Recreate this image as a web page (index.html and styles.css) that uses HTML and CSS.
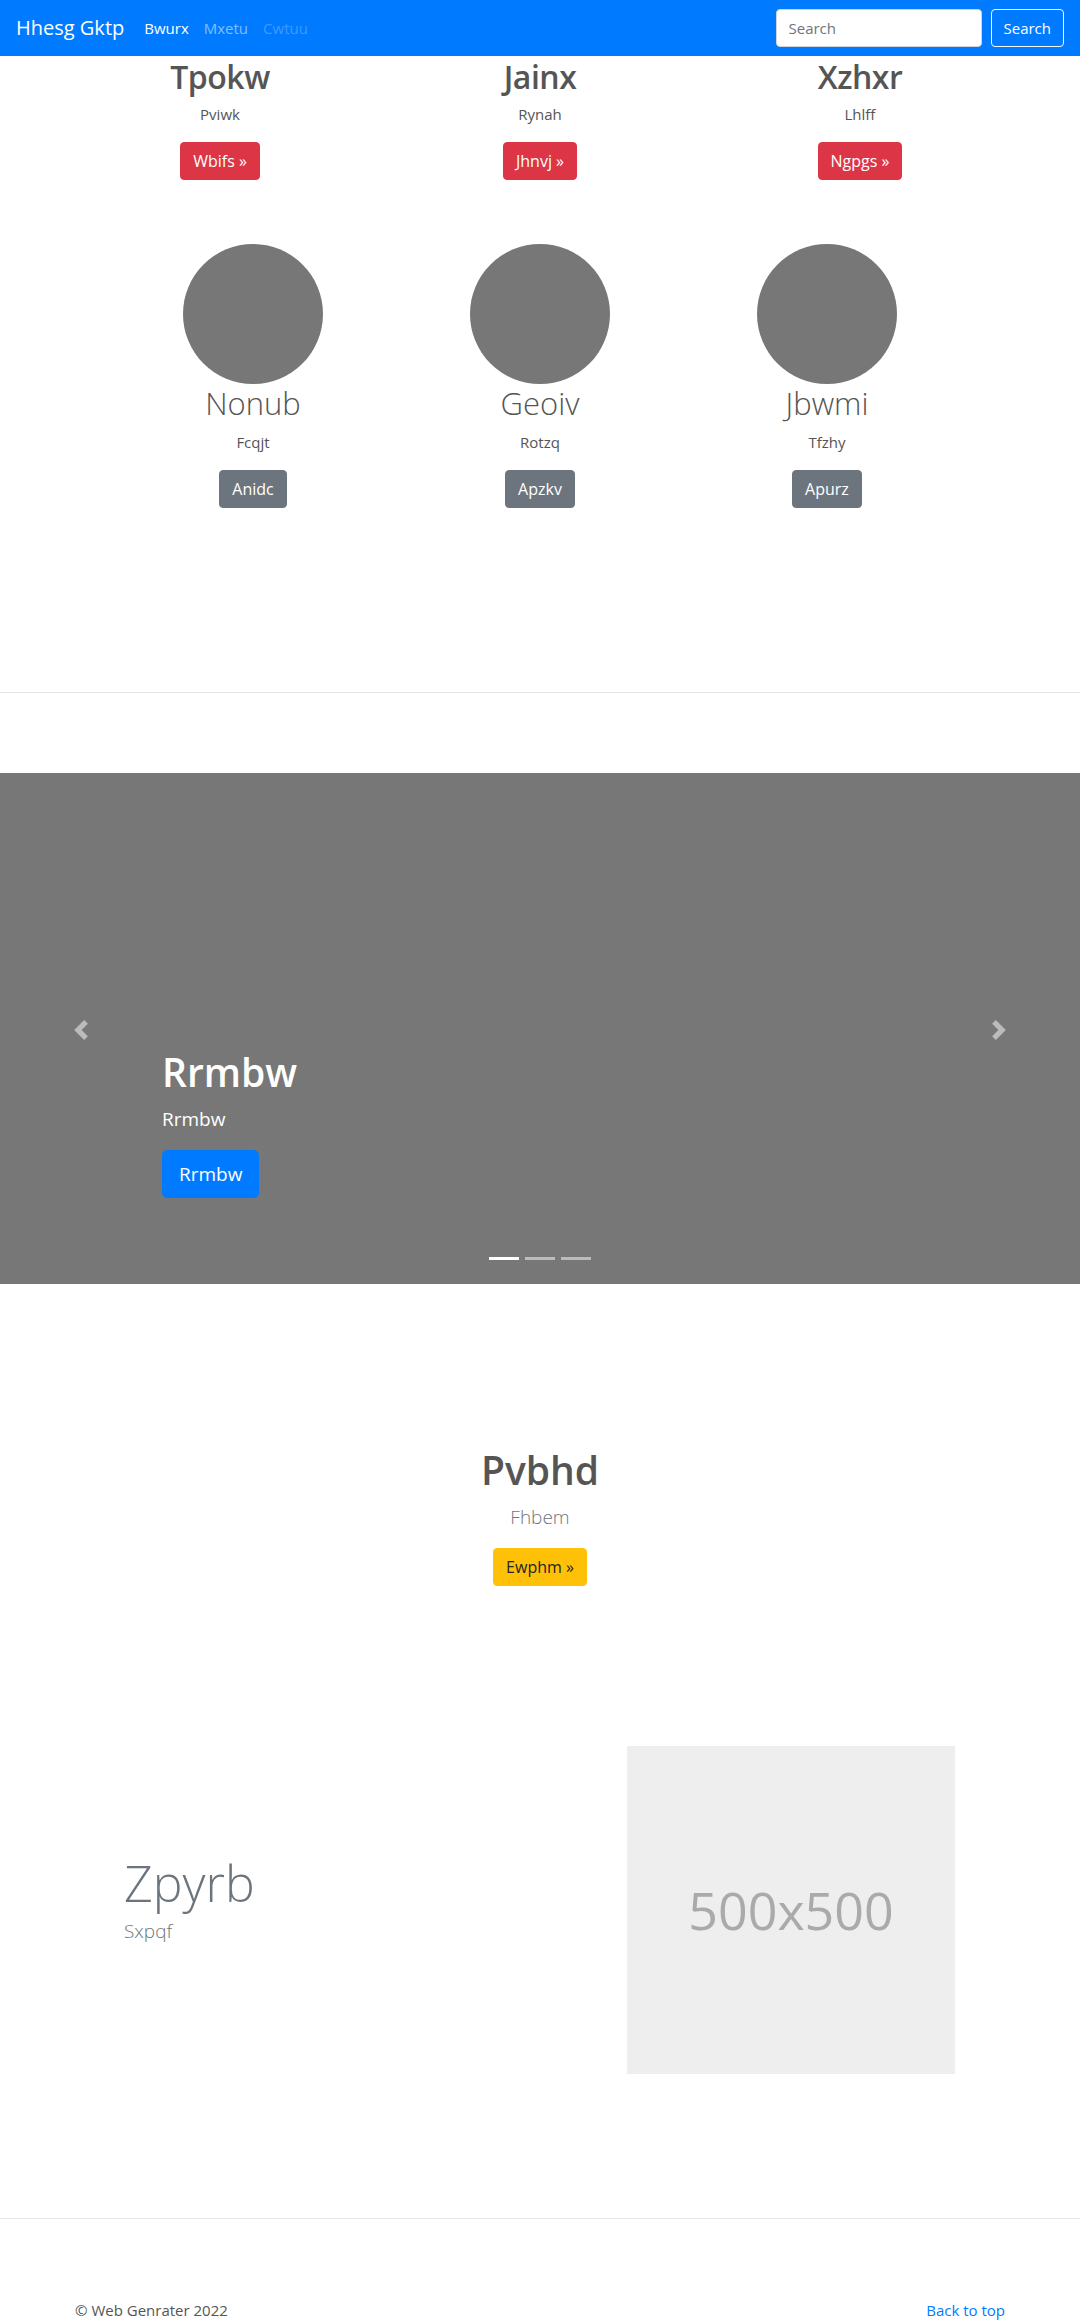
FILE: index.html
```html
<!DOCTYPE html>
<html lang="en">
<head>
<meta charset="utf-8">
<title>Hhesg Gktp</title>
<link rel="stylesheet" href="styles.css">
</head>
<body>
<nav class="navbar">
  <a class="brand" href="#">Hhesg Gktp</a>
  <ul class="nav-links">
    <li><a class="nav-link active" href="#">Bwurx</a></li>
    <li><a class="nav-link" href="#">Mxetu</a></li>
    <li><a class="nav-link disabled" href="#">Cwtuu</a></li>
  </ul>
  <form class="search">
    <input class="search-input" type="text" placeholder="Search">
    <button class="search-btn" type="button">Search</button>
  </form>
</nav>

<section class="features">
  <div class="feature">
    <h2 class="feature-title">Tpokw</h2>
    <p class="feature-text">Pviwk</p>
    <a class="btn btn-danger" href="#">Wbifs »</a>
  </div>
  <div class="feature">
    <h2 class="feature-title">Jainx</h2>
    <p class="feature-text">Rynah</p>
    <a class="btn btn-danger" href="#">Jhnvj »</a>
  </div>
  <div class="feature">
    <h2 class="feature-title">Xzhxr</h2>
    <p class="feature-text">Lhlff</p>
    <a class="btn btn-danger" href="#">Ngpgs »</a>
  </div>
</section>

<section class="team">
  <div class="member">
    <div class="avatar"></div>
    <h2 class="member-name">Nonub</h2>
    <p class="member-text">Fcqjt</p>
    <a class="btn btn-secondary" href="#">Anidc</a>
  </div>
  <div class="member">
    <div class="avatar"></div>
    <h2 class="member-name">Geoiv</h2>
    <p class="member-text">Rotzq</p>
    <a class="btn btn-secondary" href="#">Apzkv</a>
  </div>
  <div class="member">
    <div class="avatar"></div>
    <h2 class="member-name">Jbwmi</h2>
    <p class="member-text">Tfzhy</p>
    <a class="btn btn-secondary" href="#">Apurz</a>
  </div>
</section>

<hr class="divider divider-top">

<section class="carousel">
  <div class="caption">
    <h1 class="caption-title">Rrmbw</h1>
    <p class="caption-text">Rrmbw</p>
    <a class="btn btn-primary btn-lg" href="#">Rrmbw</a>
  </div>
  <a class="control control-prev" href="#" aria-label="Previous">
    <svg class="control-icon" viewBox="0 0 8 8" width="20" height="20"><path d="M5.25 0l-4 4 4 4 1.5-1.5L4.25 4l2.5-2.5L5.25 0z"/></svg>
  </a>
  <a class="control control-next" href="#" aria-label="Next">
    <svg class="control-icon" viewBox="0 0 8 8" width="20" height="20"><path d="M2.75 0l-1.5 1.5L3.75 4l-2.5 2.5L2.75 8l4-4-4-4z"/></svg>
  </a>
  <ol class="indicators">
    <li class="indicator active"></li>
    <li class="indicator"></li>
    <li class="indicator"></li>
  </ol>
</section>

<section class="cta">
  <h2 class="cta-title">Pvbhd</h2>
  <p class="cta-text">Fhbem</p>
  <a class="btn btn-warning" href="#">Ewphm »</a>
</section>

<section class="featurette">
  <div class="featurette-text">
    <h2 class="featurette-title">Zpyrb</h2>
    <p class="featurette-lead">Sxpqf</p>
  </div>
  <div class="placeholder">500x500</div>
</section>

<hr class="divider divider-bottom">

<footer class="footer">
  <p class="copyright">© Web Genrater 2022</p>
  <a class="back-top" href="#">Back to top</a>
</footer>
</body>
</html>
```

FILE: styles.css
```css
* { box-sizing: border-box; }

body {
  margin: 0;
  font-family: "Open Sans", "Noto Sans", "DejaVu Sans", sans-serif;
  font-size: 16px;
  line-height: 1.5;
  color: #212529;
  background: #fff;
}

a { text-decoration: none; }

/* Navbar */
.navbar {
  display: flex;
  align-items: center;
  height: 56px;
  background: #007bff;
  padding: 0 16px;
}
.brand {
  font-size: 20px;
  color: #fff;
  margin-right: 20px;
  line-height: 30px;
}
.nav-links {
  display: flex;
  gap: 15px;
  list-style: none;
  margin: 0;
  padding: 0;
}
.nav-link {
  color: rgba(255,255,255,.5);
  font-size: 15px;
}
.nav-link.active { color: #fff; }
.nav-link.disabled { color: rgba(255,255,255,.25); }

.search {
  margin-left: auto;
  display: flex;
  gap: 9px;
}
.search-input {
  width: 206px;
  height: 38px;
  border: 1px solid #ced4da;
  border-radius: 4px;
  padding: 6px 12px;
  font: inherit;
  font-size: 15px;
  color: #495057;
  background: #fff;
}
.search-input::placeholder { color: #6c757d; }
.search-btn {
  height: 38px;
  padding: 6px 12px;
  border: 1px solid #f8f9fa;
  border-radius: 4px;
  background: transparent;
  color: #fff;
  font: inherit;
  font-size: 15px;
}

/* Buttons */
.btn {
  display: inline-block;
  padding: 6px 12px;
  border: 1px solid transparent;
  border-radius: 4px;
  font-size: 16px;
  line-height: 24px;
  color: #fff;
}
.btn-danger { background: #dc3545; border-color: #dc3545; }
.btn-secondary { background: #6c757d; border-color: #6c757d; }
.btn-primary { background: #007bff; border-color: #007bff; }
.btn-warning { background: #ffc107; border-color: #ffc107; color: #212529; }
.btn-lg {
  padding: 8px 16px;
  font-size: 19px;
  line-height: 30px;
  border-radius: 5px;
}

/* Features row */
.features {
  width: 960px;
  margin: 0 auto;
  display: grid;
  grid-template-columns: repeat(3, 1fr);
  text-align: center;
}
.feature-title {
  margin: 0 0 8px;
  padding-top: 2px;
  font-size: 32px;
  font-weight: 600;
  line-height: 37px;
  color: #555;
  letter-spacing: -0.5px;
}
.feature-text {
  margin: 0 0 16px;
  font-size: 15px;
  color: #555;
}

/* Team row */
.team {
  width: 861px;
  margin: 64px auto 0;
  display: grid;
  grid-template-columns: repeat(3, 1fr);
  text-align: center;
}
.avatar {
  width: 140px;
  height: 140px;
  border-radius: 50%;
  background: #777;
  margin: 0 auto;
}
.member-name {
  margin: 0 0 8px;
  font-size: 31px;
  font-weight: 300;
  line-height: 39px;
  color: #555;
}
.member-text {
  margin: 0 0 17px;
  font-size: 15px;
  color: #555;
}

/* Dividers */
.divider {
  border: 0;
  border-top: 1px solid rgba(0,0,0,.1);
  margin: 0;
}
.divider-top { margin-top: 184px; }
.divider-bottom { margin-top: 144px; }

/* Carousel */
.carousel {
  position: relative;
  margin-top: 80px;
  height: 511px;
  background: #777;
  display: flex;
  align-items: flex-end;
  padding: 0 0 86px 162px;
}
.caption {
  display: flex;
  flex-direction: column;
  align-items: flex-start;
  color: #fff;
}
.caption-title {
  margin: 0 0 8px;
  font-size: 39px;
  font-weight: 600;
  line-height: 48px;
}
.caption-text {
  margin: 0 0 16px;
  font-size: 19px;
  line-height: 30px;
}
.control {
  position: absolute;
  top: 0;
  bottom: 0;
  width: 15%;
  display: flex;
  align-items: center;
  justify-content: center;
}
.control-prev { left: 0; }
.control-next { right: 0; }
.control-icon { fill: rgba(255,255,255,.5); margin-top: 3px; }
.indicators {
  position: absolute;
  left: 0;
  right: 0;
  bottom: 24px;
  display: flex;
  justify-content: center;
  list-style: none;
  margin: 0;
  padding: 0;
}
.indicator {
  width: 30px;
  height: 3px;
  margin: 0 3px;
  background: rgba(255,255,255,.5);
}
.indicator.active { background: #fff; }

/* CTA */
.cta {
  text-align: center;
  padding-top: 162px;
}
.cta-title {
  margin: 0 0 8px;
  font-size: 39px;
  font-weight: 600;
  line-height: 48px;
  color: #555;
}
.cta-text {
  margin: 0 0 16px;
  font-size: 19px;
  font-weight: 300;
  line-height: 30px;
  color: #6c757d;
}

/* Featurette */
.featurette {
  display: flex;
  align-items: center;
  justify-content: space-between;
  margin-top: 160px;
  padding: 0 125px 0 124px;
}
.featurette-title {
  margin: 0;
  font-size: 50px;
  font-weight: 300;
  line-height: 66px;
  color: #6c757d;
}
.featurette-lead {
  margin: 0 0 24px;
  font-size: 19px;
  font-weight: 300;
  line-height: 30px;
  color: #6c757d;
}
.placeholder {
  width: 328px;
  height: 328px;
  background: #eee;
  color: #aaa;
  font-size: 52px;
  display: flex;
  align-items: center;
  justify-content: center;
}

/* Footer */
.footer {
  width: 930px;
  margin: 80px auto 0;
  display: flex;
  justify-content: space-between;
  font-size: 15px;
}
.copyright { margin: 0 0 16px; color: #555; }
.back-top { color: #007bff; }
```
